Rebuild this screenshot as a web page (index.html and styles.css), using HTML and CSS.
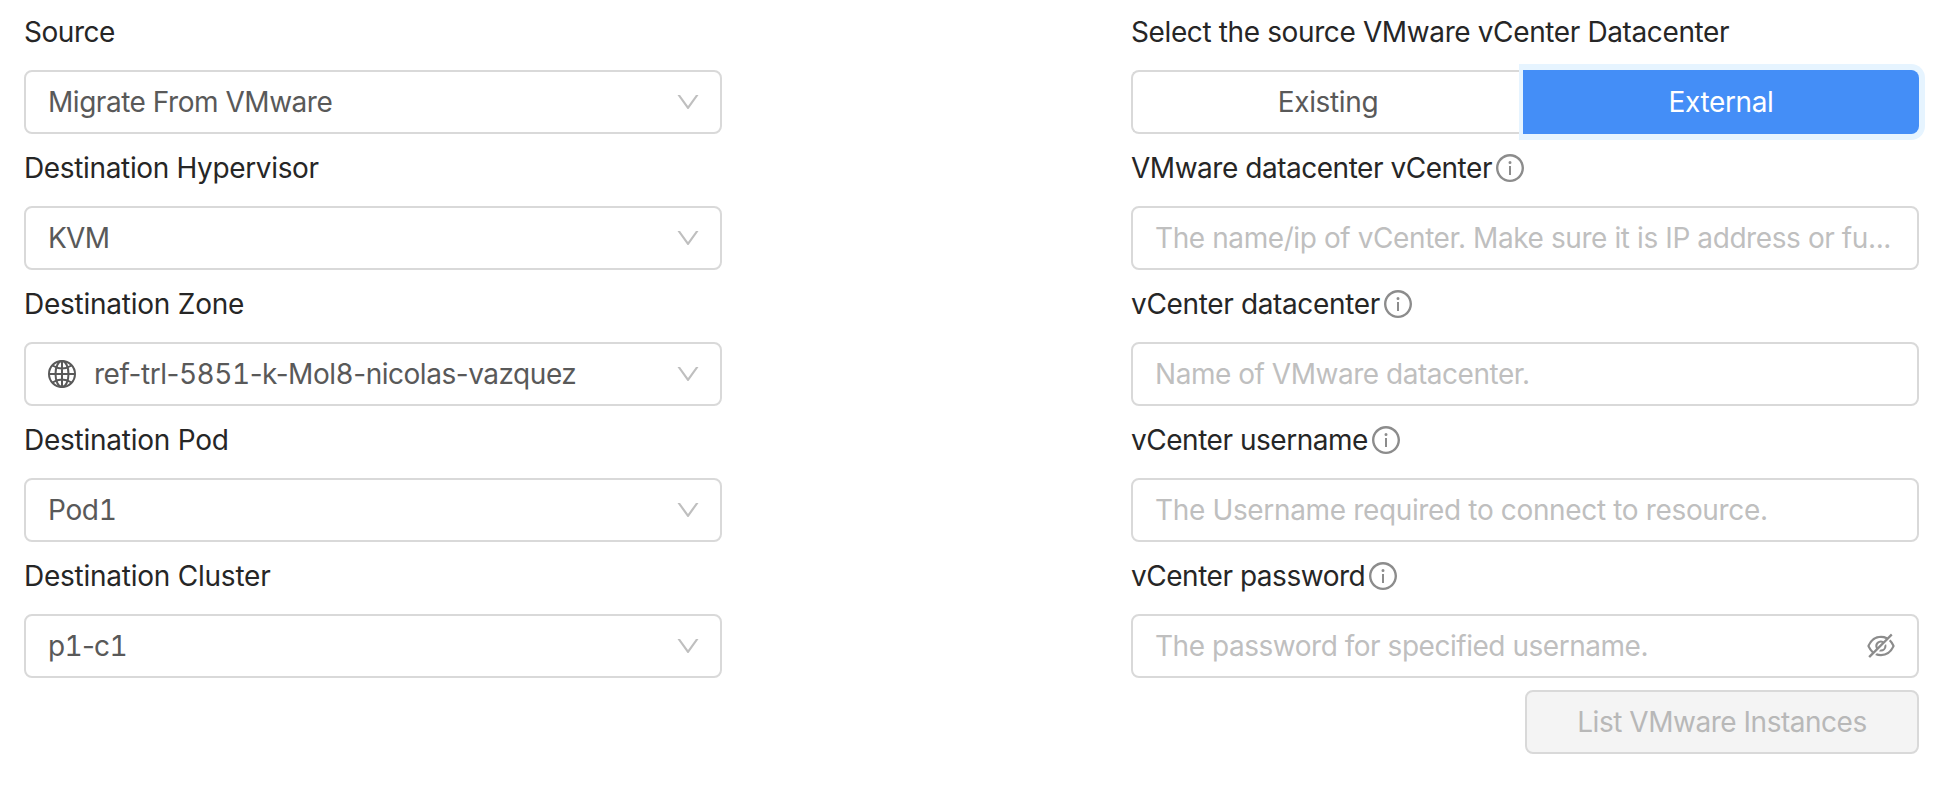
FILE: index.html
```html
<!DOCTYPE html>
<html lang="en">
<head>
<meta charset="utf-8">
<title>Import VMware instances</title>
<link rel="stylesheet" href="styles.css">
</head>
<body>
<svg class="defs" aria-hidden="true">
  <symbol id="down" viewBox="0 0 1024 1024"><path d="M884 256h-75c-5.1 0-9.9 2.5-12.9 6.6L512 654.2 227.9 262.6c-3-4.1-7.8-6.6-12.9-6.6h-75c-6.5 0-10.3 7.4-6.5 12.7l352.6 486.1c12.8 17.6 39 17.6 51.7 0l352.6-486.1c3.9-5.3.1-12.7-6.4-12.7z"/></symbol>
  <symbol id="info" viewBox="0 0 1024 1024"><path d="M512 64C264.6 64 64 264.6 64 512s200.6 448 448 448 448-200.6 448-448S759.4 64 512 64zm0 820c-205.4 0-372-166.6-372-372s166.6-372 372-372 372 166.6 372 372-166.6 372-372 372z"/><path d="M464 336a48 48 0 1096 0 48 48 0 10-96 0zm72 112h-48c-4.4 0-8 3.6-8 8v272c0 4.4 3.6 8 8 8h48c4.4 0 8-3.6 8-8V456c0-4.4-3.6-8-8-8z"/></symbol>
  <symbol id="globe" viewBox="0 0 32 32"><g fill="none" stroke="currentColor" stroke-width="2"><circle cx="16" cy="16" r="13"/><ellipse cx="16" cy="16" rx="6.5" ry="13"/><path d="M16 3v26M3 16h26M6.5 7.5Q16 13.5 25.5 7.5M6.5 24.5Q16 18.5 25.5 24.5"/></g></symbol>
  <symbol id="eye-off" viewBox="0 0 1024 1024"><path d="M942.2 486.2Q889.47 375.11 816.7 305l-50.88 50.88C807.31 395.53 843.45 447.4 874.7 512 791.5 684.2 673.4 766 512 766q-72.67 0-133.87-22.38L323 798.75Q408 838 512 838q288.3 0 430.2-300.3a60.29 60.29 0 000-51.5zm-63.57-320.64L836 122.88a8 8 0 00-11.32 0L715.31 232.2Q624.86 186 512 186q-288.3 0-430.2 300.3a60.3 60.3 0 000 51.5q56.69 119.4 136.5 191.41L112.48 835a8 8 0 000 11.31L155.17 889a8 8 0 0011.31 0l712.15-712.12a8 8 0 000-11.32zM149.3 512C232.6 339.8 350.7 258 512 258c54.54 0 104.13 9.36 149.12 28.39l-70.3 70.3a176 176 0 00-238.13 238.13l-83.42 83.42C223.1 637.49 183.3 582.28 149.3 512zm246.7 0a112.11 112.11 0 01146.2-106.69L401.31 546.2A112 112 0 01396 512z"/><path d="M508 624c-3.46 0-6.87-.16-10.25-.47l-52.82 52.82a176.09 176.09 0 00227.42-227.42l-52.82 52.82c.31 3.38.47 6.79.47 10.25a111.94 111.94 0 01-112 112z"/></symbol>
</svg>
<form class="page">
  <section class="column source">
    <label class="label tight">Source</label>
    <div class="field"><span class="value tight">Migrate From VMware</span><svg class="arrow"><use href="#down"/></svg></div>
    <label class="label">Destination Hypervisor</label>
    <div class="field"><span class="value tighter">KVM</span><svg class="arrow"><use href="#down"/></svg></div>
    <label class="label loose">Destination Zone</label>
    <div class="field zone"><svg class="icon"><use href="#globe"/></svg><span class="value tight">ref-trl-<span class="num">5851</span>-k-Mol<span class="num">8</span>-nicolas-vazquez</span><svg class="arrow"><use href="#down"/></svg></div>
    <label class="label loose">Destination Pod</label>
    <div class="field"><span class="value">Pod<span class="num">1</span></span><svg class="arrow"><use href="#down"/></svg></div>
    <label class="label loose">Destination Cluster</label>
    <div class="field"><span class="value tighter">p<span class="num">1</span>-c<span class="num">1</span></span><svg class="arrow"><use href="#down"/></svg></div>
  </section>
  <section class="column vcenter">
    <label class="label title">Select the source VMware vCenter Datacenter</label>
    <div class="segmented"><span class="option">Existing</span><span class="option selected">External</span></div>
    <label class="label tight"><span>VMware datacenter vCenter</span><svg class="icon"><use href="#info"/></svg></label>
    <div class="field"><span class="hint address">The name/ip of vCenter. Make sure it is IP address or fu...</span></div>
    <label class="label"><span>vCenter datacenter</span><svg class="icon"><use href="#info"/></svg></label>
    <div class="field"><span class="hint tight">Name of VMware datacenter.</span></div>
    <label class="label tight"><span>vCenter username</span><svg class="icon"><use href="#info"/></svg></label>
    <div class="field"><span class="hint">The Username required to connect to resource.</span></div>
    <label class="label tight"><span>vCenter password</span><svg class="icon"><use href="#info"/></svg></label>
    <div class="field password"><span class="hint tight">The password for specified username.</span><svg class="eye"><use href="#eye-off"/></svg></div>
    <button class="submit tight" type="button" disabled>List VMware Instances</button>
  </section>
</form>
</body>
</html>
```
FILE: styles.css
```css
* { box-sizing: border-box; }
body { margin: 0; background: #fff; color: #262626; font: 28px/44px Inter, "Liberation Sans", sans-serif; letter-spacing: -0.35px; }
.defs { display: none; }
svg { fill: currentColor; flex: none; }
.page { display: flex; justify-content: space-between; padding: 0 41px 0 24px; }
.column { display: flex; flex-direction: column; }
.source { width: 698px; }
.vcenter { width: 788px; }
.tight { letter-spacing: -0.47px; }
.tighter { letter-spacing: -0.7px; }
.loose { letter-spacing: -0.24px; }
.title { letter-spacing: -0.38px; }
.address { letter-spacing: -0.41px; }
.num { font-variant-numeric: tabular-nums; }
.label { display: flex; align-items: center; height: 64px; margin-bottom: 6px; white-space: nowrap; }
.icon { width: 32px; height: 32px; }
.label .icon { margin-left: 2px; color: #8c8c8c; }
.field { display: flex; align-items: center; height: 64px; margin-bottom: 2px; padding: 0 18px 0 22px; border: 2px solid #d9d9d9; border-radius: 8px; color: #595959; white-space: nowrap; }
.arrow { width: 28px; height: 28px; margin-left: auto; color: #bfbfbf; }
.zone { padding-left: 20px; }
.zone .icon { margin-right: 16px; }
.hint { color: #bfbfbf; }
.segmented { display: flex; height: 64px; margin-bottom: 2px; }
.option { flex: none; width: 50%; display: flex; align-items: center; justify-content: center; padding-right: 2px; border: 2px solid #d9d9d9; border-right: 0; border-radius: 8px 0 0 8px; color: #595959; }
.selected { border: 0; border-radius: 0 8px 8px 0; background: #448ef7; color: #fff; box-shadow: -2px 0 #448ef7, 0 0 0 6px #e6f4ff; }
.password { padding-right: 20px; }
.eye { width: 32px; height: 32px; margin-left: auto; color: #8c8c8c; }
.submit { width: 394px; height: 64px; margin: 10px 0 0 auto; padding: 0; border: 2px solid #d9d9d9; border-radius: 8px; background: #f4f4f4; color: #b8b8b8; font: inherit; }
```
